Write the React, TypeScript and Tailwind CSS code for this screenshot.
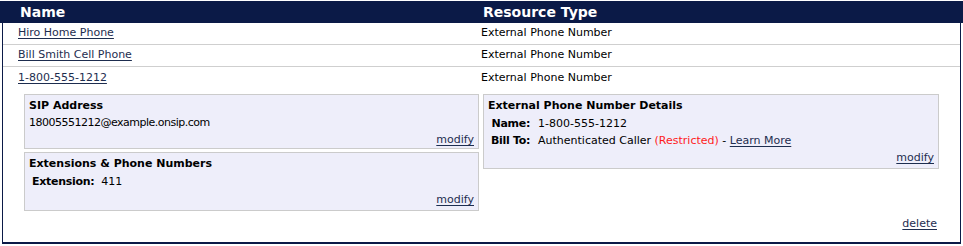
const FONT = { fontFamily: '"DejaVu Sans", Verdana, sans-serif' }

const rows = [
  { name: 'Hiro Home Phone', type: 'External Phone Number' },
  { name: 'Bill Smith Cell Phone', type: 'External Phone Number' },
]

function Link({ children }: { children: React.ReactNode }) {
  return <a href="#" className="text-[#1d2d4f] underline underline-offset-2">{children}</a>
}

function Panel({ title, children, className = '' }: { title: string; children: React.ReactNode; className?: string }) {
  return (
    <div className={`bg-[#eeeefa] border border-[#cbcbcb] px-[4px] pt-[2px] ${className}`}>
      <div className="font-bold leading-[17px]">{title}</div>
      {children}
    </div>
  )
}

export default function App() {
  return (
    <div className="w-[963px] h-[246px] bg-white pt-[1px] text-[11px] text-black" style={FONT}>
      {/* Header */}
      <div className="flex h-[22px] bg-[#0b1a47] text-white text-[14px] font-bold leading-[22px]">
        <div className="w-[479px] pl-[20px]">Name</div>
        <div className="pl-[4px]">Resource Type</div>
      </div>

      <div className="mx-[2px] border-x border-b-2 border-[#0b1a47]">
        {rows.map(r => (
          <div key={r.name} className="flex h-[22px] items-center border-b border-[#cfcfcf]">
            <div className="w-[476px] pl-[15px]"><Link>{r.name}</Link></div>
            <div className="pl-[2px]">{r.type}</div>
          </div>
        ))}

        {/* Expanded row */}
        <div className="flex h-[22px] items-center">
          <div className="w-[476px] pl-[15px]"><Link>1-800-555-1212</Link></div>
          <div className="pl-[2px]">External Phone Number</div>
        </div>

        <div className="pt-[5px] pl-[21px] flex gap-[4px]">
          <div className="w-[455px] flex flex-col">
            <Panel title="SIP Address">
              <div className="leading-[17px] tracking-[-0.5px]">18005551212@example.onsip.com</div>
              <div className="leading-[17px] text-right"><Link>modify</Link></div>
            </Panel>
            <Panel title="Extensions &amp; Phone Numbers" className="mt-[3px] pb-[2px]">
              <div className="flex leading-[19px] pl-[3px]">
                <span className="font-bold tracking-[-0.3px]">Extension:</span>
                <span className="pl-[7px]">411</span>
              </div>
              <div className="leading-[17px] text-right"><Link>modify</Link></div>
            </Panel>
          </div>

          <div className="w-[456px] self-start">
            <Panel title="External Phone Number Details" className="pb-[2px]">
              <div className="mt-[1px]">
                <div className="flex leading-[17px]">
                  <span className="w-[42px] text-right font-bold tracking-[-0.3px]">Name:</span>
                  <span className="pl-[8px]">1-800-555-1212</span>
                </div>
                <div className="flex leading-[17px]">
                  <span className="w-[42px] text-right font-bold tracking-[-0.3px] whitespace-nowrap">Bill To:</span>
                  <span className="pl-[8px]">
                    Authenticated Caller <span className="text-[#ff1a1a]">(Restricted)</span> - <Link>Learn More</Link>
                  </span>
                </div>
              </div>
              <div className="leading-[17px] text-right"><Link>modify</Link></div>
            </Panel>
          </div>
        </div>

        <div className="mt-[4px] pb-[10px] pr-[23px] leading-[17px] text-right">
          <Link>delete</Link>
        </div>
      </div>
    </div>
  )
}
